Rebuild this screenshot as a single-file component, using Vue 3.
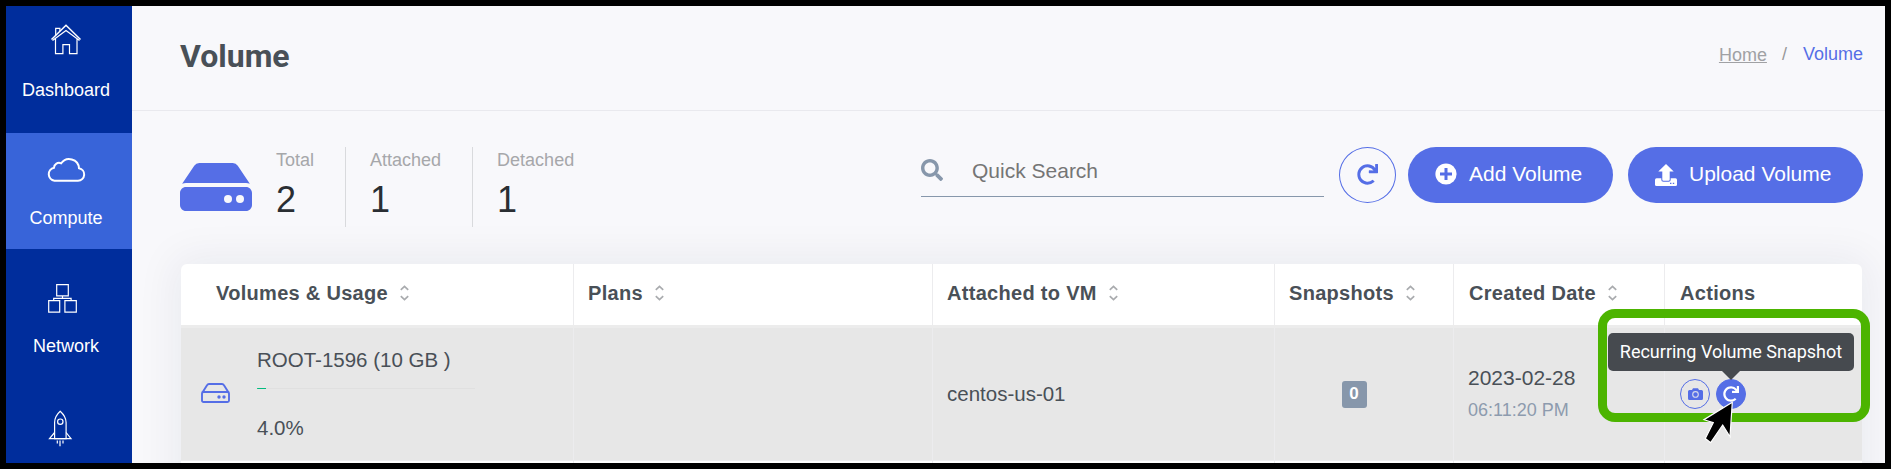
<script setup>
const menu = [
  { name: 'Dashboard', icon: 'home' },
  { name: 'Compute', icon: 'cloud', active: true },
  { name: 'Network', icon: 'network' },
  { name: '', icon: 'rocket' },
]
const stats = [
  { label: 'Total', value: 2 },
  { label: 'Attached', value: 1 },
  { label: 'Detached', value: 1 },
]
const columns = [
  { title: 'Volumes & Usage', sort: true },
  { title: 'Plans', sort: true },
  { title: 'Attached to VM', sort: true },
  { title: 'Snapshots', sort: true },
  { title: 'Created Date', sort: true },
  { title: 'Actions', sort: false },
]
const usage = 4
const redoPath =
  'M500.33 0h-47.41a12 12 0 0 0-12 12.57l4 82.76A247.42 247.42 0 0 0 256 8C119.34 8 7.9 119.53 8 256.19 8.1 393.07 119.1 504 256 504a247.1 247.1 0 0 0 166.18-63.91 12 12 0 0 0 .48-17.43l-34-34a12 12 0 0 0-16.38-.55A176 176 0 1 1 402.1 157.8l-101.53-4.87a12 12 0 0 0-12.57 12v47.41a12 12 0 0 0 12 12h200.33a12 12 0 0 0 12-12V12a12 12 0 0 0-12-12z'
</script>

<template>
  <div class="frame">
    <nav class="sidebar">
      <a v-for="item in menu" :key="item.icon" class="item" :class="{ active: item.active }">
        <svg class="nav-icon" viewBox="0 0 48 48" fill="none" stroke="#fff" stroke-width="1.2">
          <g v-if="item.icon === 'home'">
            <path d="M9.5 22.5 24 8.2l14.5 14.3" stroke-width="1.5" />
            <path d="M13.5 21.5V36.6h7.4v-9h6.6v9H35V21.5M10.5 23.5 24 13.4 37.5 23.5" />
            <path d="M13.7 18.5v-7.2h4.2v3" />
          </g>
          <path v-else-if="item.icon === 'cloud'" stroke-width="2" d="M12.5 35.7H36A6.3 6.3 0 0 0 37 23.2 9.8 9.8 0 0 0 19.2 18.3 5 5 0 0 0 12 22.7a6.6 6.6 0 0 0 .5 13z" />
          <g v-else-if="item.icon === 'network'">
            <path d="M14.7 11.6h11.6v11.2H14.7zM6.7 27.7h11v11.4h-11zM22.9 27.7h11.4v11.4H22.9zM20.5 22.8v2.5M11.7 27.7v-2.4h17.4v2.4" />
          </g>
          <g v-else>
            <path d="M18.2 10.2c-4 3.6-5.6 7-5.6 11.3v16.2h11.5V21.5c0-4.300-1.900-7.700-5.900-11.300z" />
            <circle cx="18.300" cy="20.700" r="2.700" />
            <path d="M12.600 31.500 7.500 37.700h21.500l-4.900-6.200M15.300 39.500v3M18 39.500v5.800M21 39.500v3" />
          </g>
        </svg>
        <span class="nav-label">{{ item.name }}</span>
      </a>
    </nav>

    <main class="main">
      <header class="page-head">
        <h1>Volume</h1>
        <div class="crumbs">
          <a class="home">Home</a><span class="slash">/</span><span class="here">Volume</span>
        </div>
      </header>

      <section class="toolbar">
        <svg class="hdd" viewBox="0 0 576 512" fill="#556ee6">
          <path d="M576 304v96c0 26.51-21.49 48-48 48H48c-26.51 0-48-21.49-48-48v-96c0-26.51 21.49-48 48-48h480c26.51 0 48 21.49 48 48zm-48-80a79.557 79.557 0 0 1 30.777 6.165L462.25 85.374A48.003 48.003 0 0 0 422.311 64H153.689a48 48 0 0 0-39.938 21.374L17.223 230.165A79.557 79.557 0 0 1 48 224h480z" />
          <circle cx="480" cy="352" r="32" fill="#f8f8fb" />
          <circle cx="384" cy="352" r="32" fill="#f8f8fb" />
        </svg>
        <div class="stats">
          <div v-for="s in stats" :key="s.label" class="stat">
            <span class="stat-label">{{ s.label }}</span>
            <span class="stat-value">{{ s.value }}</span>
          </div>
        </div>
        <div class="controls">
          <div class="search">
            <svg viewBox="0 0 512 512" fill="#8797ab">
              <path d="M505 442.700 405.300 343c-4.500-4.500-10.600-7-17-7H372c27.600-35.300 44-79.700 44-128C416 93.100 322.900 0 208 0S0 93.100 0 208s93.100 208 208 208c48.300 0 92.700-16.400 128-44v16.300c0 6.400 2.500 12.500 7 17l99.700 99.700c9.400 9.400 24.600 9.400 33.900 0l28.300-28.300c9.400-9.400 9.400-24.600.1-34zM208 336c-70.700 0-128-57.200-128-128 0-70.700 57.200-128 128-128 70.700 0 128 57.200 128 128 0 70.700-57.200 128-128 128z" />
            </svg>
            <span>Quick Search</span>
          </div>
          <button class="refresh">
            <svg viewBox="0 0 512 512" fill="#556ee6"><path :d="redoPath" /></svg>
          </button>
          <button class="btn add">
            <svg viewBox="0 0 22 22">
              <circle cx="11" cy="11" r="10.600" fill="#fff" />
              <path d="M11 5v12M5 11h12" stroke="#556ee6" stroke-width="3" />
            </svg>
            <span>Add Volume</span>
          </button>
          <button class="btn upload">
            <svg viewBox="0 0 22 22">
              <rect y="14.300" width="22" height="7.700" rx="1.500" fill="#fff" />
              <path d="M6.300 14h9.400v1.800q0 2-2 2H8.300q-2 0-2-2z" fill="#556ee6" />
              <path d="M11 0l7.700 7.400h-4v8.200q0 1.200-1.200 1.200h-5q-1.200 0-1.200-1.200V7.400h-4z" fill="#fff" />
              <path d="M15 19.300h1.400M17.800 19.300h1.400" stroke="#556ee6" stroke-width="1.300" />
            </svg>
            <span>Upload Volume</span>
          </button>
        </div>
      </section>

      <section class="table">
        <div class="row head">
          <div v-for="c in columns" :key="c.title" class="cell">
            <span>{{ c.title }}</span>
            <svg v-if="c.sort" class="sort" viewBox="0 0 9 16" fill="none" stroke="#a9abae" stroke-width="1.700">
              <path d="M.800 4.800 4.500 1.300 8.200 4.800M.800 11.200 4.500 14.700 8.200 11.200" />
            </svg>
          </div>
        </div>
        <div class="row body">
          <div class="cell volume">
            <svg class="hdd-sm" viewBox="0 0 29 20" fill="none" stroke="#556ee6" stroke-width="1.900">
              <rect x="1" y="9" width="27" height="10" rx="1.500" />
              <path d="M1.300 9.800 6 2.200Q6.700 1 8 1h13q1.300 0 2 1.200l4.700 7.600" />
              <g fill="#556ee6" stroke="none"><circle cx="18" cy="14" r="1.700" /><circle cx="23" cy="14" r="1.700" /></g>
            </svg>
            <div class="vol-info">
              <span class="vol-name">ROOT-1596 (10 GB )</span>
              <div class="bar"><div class="fill" :style="{ width: usage + '%' }"></div></div>
              <span class="pct">4.0%</span>
            </div>
          </div>
          <div class="cell"></div>
          <div class="cell vm">centos-us-01</div>
          <div class="cell snaps"><span class="badge">0</span></div>
          <div class="cell created">
            <span class="date">2023-02-28</span>
            <span class="time">06:11:20 PM</span>
          </div>
          <div class="cell actions">
            <span class="act">
              <svg class="cam" viewBox="0 0 15 12">
                <path d="M1.500 2H4L5 .300h5L11 2h2.500Q15 2 15 3.500v7Q15 12 13.500 12h-12Q0 12 0 10.500v-7Q0 2 1.500 2z" fill="#556ee6" />
                <circle cx="7.500" cy="6.400" r="2.800" fill="none" stroke="#d9dcec" stroke-width="1.100" />
              </svg>
            </span>
            <span class="act on">
              <svg viewBox="0 0 512 512" fill="#fff" class="redo-sm"><path :d="redoPath" /></svg>
              <span class="tip">Recurring Volume Snapshot</span>
            </span>
          </div>
        </div>
        <div class="row next"><div v-for="n in 6" :key="n" class="cell"></div></div>
      </section>
    </main>

    <div class="highlight"></div>
    <svg class="cursor" viewBox="0 0 36 46">
      <path d="M30.300 2.300 2 19.700l9.300 3L3.300 38.600l5.400 4.100 12-17.700 7.300 11.700z" fill="#000" stroke="#fff" stroke-width="1.200" />
    </svg>
  </div>
</template>

<style>
body {
  margin: 0;
  overflow: hidden;
}
</style>

<style scoped>
.frame {
  position: relative;
  box-sizing: border-box;
  width: 1891px;
  height: 469px;
  border: 6px solid #000;
  display: flex;
  overflow: hidden;
  background: #f8f8fb;
  font-family: "Liberation Sans", Arial, sans-serif;
  color: #495057;
}
svg {
  display: block;
  flex: none;
}
.sidebar {
  width: 126px;
  flex: none;
  height: 457px;
  background: #002d9c;
  overflow: hidden;
  position: relative;
  z-index: 1;
}
.item {
  box-sizing: border-box;
  height: 116px;
  margin-bottom: 12px;
  padding: 12px 6px 0 0;
  display: flex;
  flex-direction: column;
  align-items: center;
  gap: 13px;
  color: #fff;
  font-size: 18px;
  line-height: 24px;
}
.item:first-child {
  margin-top: -1px;
}
.active {
  background: #3864d9;
}
.nav-icon {
  width: 48px;
  height: 48px;
}
.main {
  width: 1753px;
  flex: none;
  height: 457px;
  overflow: hidden;
}
.page-head {
  box-sizing: border-box;
  height: 105px;
  border-bottom: 1px solid #e9e9ee;
  padding: 30px 22px 0 48px;
  display: flex;
  justify-content: space-between;
}
h1 {
  margin: 0;
  font: 700 32px/40px Roboto, sans-serif;
}
.crumbs {
  display: flex;
  font-size: 18px;
  line-height: 24px;
  padding-top: 6px;
}
.home {
  color: #a0a1a4;
  padding-top: 1px;
  text-decoration: underline;
}
.slash {
  color: #999;
  padding: 0 16px 0 15px;
}
.here {
  color: #556ee6;
}
.toolbar {
  height: 80px;
  padding: 36px 22px 37px 48px;
  display: flex;
}
.hdd {
  width: 72px;
  height: 64px;
  margin-top: 8px;
}
.stats {
  display: flex;
  margin-left: 23px;
}
.stat {
  box-sizing: border-box;
  height: 80px;
  display: flex;
  flex-direction: column;
  padding: 1px 31px 0 24px;
  border-right: 1px solid #d9dadd;
}
.stat:first-child {
  padding-left: 1px;
}
.stat:last-child {
  border: 0;
}
.stat-label {
  color: #a6a7aa;
  font-size: 18px;
  line-height: 24px;
}
.stat-value {
  color: #2a2e33;
  font-size: 36px;
  line-height: 40px;
  margin-top: 8px;
}
.controls {
  margin-left: auto;
  display: flex;
  align-items: flex-start;
}
.search {
  box-sizing: border-box;
  width: 403px;
  height: 50px;
  border-bottom: 1px solid #8797ab;
  display: flex;
  align-items: center;
  gap: 29px;
  font-size: 21px;
  color: #757575;
  margin-right: 15px;
  padding-bottom: 3px;
}
.search svg {
  width: 22px;
  height: 22px;
}
.search span {
  margin-top: 1px;
}
button {
  box-sizing: border-box;
  height: 56px;
  padding: 0;
  font: 21px "Liberation Sans", Arial, sans-serif;
}
.refresh {
  width: 57px;
  border: 1px solid #556ee6;
  border-radius: 50%;
  background: transparent;
  display: flex;
  align-items: center;
  justify-content: center;
  margin-right: 12px;
}
.refresh svg {
  width: 21px;
  height: 21px;
  margin-top: -2px;
}
.btn {
  border: 0;
  border-radius: 28px;
  background: #556ee6;
  color: #fff;
  display: flex;
  align-items: center;
  padding-left: 27px;
  gap: 12px;
}
.btn svg {
  width: 22px;
  height: 22px;
}
.btn span {
  margin-top: -2px;
}
.add {
  width: 205px;
  margin-right: 15px;
}
.add svg {
  margin-top: -2px;
}
.upload {
  width: 235px;
}
.table {
  margin-left: 49px;
  width: 1681px;
  background: #fff;
  border-radius: 6px 6px 0 0;
  box-shadow: 0 0 40px 8px rgba(18, 38, 63, 0.06);
  height: 260px;
}
.row {
  display: grid;
  grid-template-columns: 393px 359px 342px 179px 211px 197px;
}
.cell {
  box-sizing: border-box;
  border-right: 1px solid #ececee;
  padding-left: 14px;
  display: flex;
  align-items: center;
  font-size: 20.5px;
}
.cell:last-child {
  border-right: 0;
}
.head {
  height: 61px;
  border-bottom: 3px solid #ececec;
}
.head .cell {
  font-size: 20px;
  font-weight: 700;
  letter-spacing: 0.3px;
  padding-bottom: 2px;
}
.head .cell:first-child {
  padding-left: 35px;
}
.head .cell:nth-child(n + 5) {
  padding-left: 15px;
}
.sort {
  width: 9px;
  height: 16px;
  margin-left: 12px;
  margin-top: -2px;
}
.body {
  height: 132px;
  background: #e7e7e7;
  border-bottom: 1px solid #ededef;
}
.next {
  height: 40px;
}
.volume {
  padding-left: 20px;
}
.hdd-sm {
  width: 29px;
  height: 20px;
  margin-top: -2px;
}
.vol-info {
  margin-left: 27px;
  line-height: 24px;
  height: 92px;
  display: flex;
  flex-direction: column;
}
.bar {
  width: 218px;
  height: 4px;
  border-radius: 2px;
  background: #e0e0e0;
  overflow: hidden;
  margin: 16px 0 27px;
}
.fill {
  height: 4px;
  background: #02bb7e;
}
.snaps {
  padding: 0 20px 0 0;
  justify-content: center;
}
.badge {
  width: 25px;
  height: 27px;
  border-radius: 3px;
  background: #8797ab;
  color: #fff;
  font-size: 17px;
  font-weight: 700;
  line-height: 26px;
  text-align: center;
}
.created {
  flex-direction: column;
  align-items: flex-start;
  justify-content: center;
}
.date {
  font-size: 21px;
  line-height: 30px;
}
.time {
  font-size: 18px;
  line-height: 30px;
  color: #8d9bae;
  margin-top: 2px;
}
.actions {
  padding-left: 15px;
  gap: 6px;
}
.act {
  box-sizing: border-box;
  position: relative;
  width: 30px;
  height: 30px;
  border: 1px solid #556ee6;
  border-radius: 50%;
  display: flex;
  align-items: center;
  justify-content: center;
}
.on {
  background: #556ee6;
}
.cam {
  width: 15px;
  height: 12px;
}
.redo-sm {
  width: 16px;
  height: 16px;
}
.tip {
  position: absolute;
  left: -109px;
  top: -47px;
  width: 246px;
  height: 38px;
  border-radius: 5px;
  background: #464a4f;
  color: #fff;
  font: 18px/37px Roboto, sans-serif;
  text-align: center;
  white-space: nowrap;
  z-index: 3;
}
.tip::after {
  content: "";
  position: absolute;
  left: 114px;
  top: 38px;
  border: 9px solid transparent;
  border-bottom: 0;
  border-top-color: #464a4f;
}
.highlight {
  position: absolute;
  box-sizing: border-box;
  left: 1592px;
  top: 303px;
  width: 272px;
  height: 113px;
  border: 9px solid #4cb400;
  border-radius: 17px;
}
.cursor {
  position: absolute;
  left: 1696px;
  top: 394px;
  width: 36px;
  height: 46px;
}
</style>
